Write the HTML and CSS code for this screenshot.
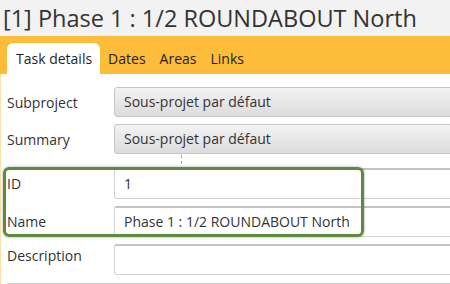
FILE: index.html
```html
<!DOCTYPE html>
<html lang="en">
<head>
    <meta charset="UTF-8">
    <title>Task details</title>
    <link rel="stylesheet" href="styles.css">
</head>
<body>

    <div class="window">
        <div class="title">[1] Phase 1 : 1/2 ROUNDABOUT North</div>

        <div class="tabs">
            <span class="tab active">Task details</span>
            <span class="tab">Dates</span>
            <span class="tab">Areas</span>
            <span class="tab">Links</span>
        </div>

        <div class="panel">
            <div class="row">
                <span class="label">Subproject</span>
                <div class="combo">Sous-projet par défaut</div>
            </div>
            <div class="row">
                <span class="label">Summary</span>
                <div class="combo">Sous-projet par défaut</div>
            </div>

            <div class="splitter"></div>

            <!-- champs mis en évidence -->
            <div class="group">
                <div class="row">
                    <span class="label">ID</span>
                    <div class="field">1</div>
                </div>
                <div class="row">
                    <span class="label">Name</span>
                    <div class="field">Phase 1 : 1/2 ROUNDABOUT North</div>
                </div>
            </div>

            <div class="row top">
                <span class="label">Description</span>
                <div class="field"></div>
            </div>

            <div class="rule"></div>
        </div>
    </div>

</body>
</html>
```

FILE: styles.css
```css
body {
    margin: 0;
    padding: 0;
    font-family: 'Open Sans', 'Noto Sans', sans-serif;
    color: #333;
    background: #fff;
}

.window {
    width: 450px;
    height: 284px;
    overflow: hidden;
}

.title {
    height: 36px;
    background-color: #f2f2f2;
    padding-left: 3px;
    font-size: 23.5px;
    line-height: 36px;
    color: #333;
    white-space: nowrap;
}

.tabs {
    height: 38px;
    background-color: #fdbc3a;
    display: flex;
    align-items: flex-end;
    padding-left: 7px;
    box-sizing: border-box;
}

.tab {
    font-size: 14px;
    color: #1f1f1f;
    height: 31px;
    line-height: 31px;
    padding: 0 7px;
}

.tab.active {
    background: #fff;
    border-radius: 6px 6px 0 0;
    padding: 0 8px 0 9px;
    margin-right: 1px;
}

.panel {
    border-left: 1px solid #fce2a6;
    padding: 13px 0 0 6px;
}

.row {
    display: flex;
    align-items: center;
    margin-bottom: 7px;
}

.row.top {
    align-items: flex-start;
}

.row.top .label {
    padding-top: 2px;
}

.label {
    width: 107px;
    flex: none;
    font-size: 14px;
    color: #333;
}

.combo {
    flex: 1;
    height: 30px;
    margin-right: -6px;
    box-sizing: border-box;
    border: 1px solid #c6c6c6;
    border-radius: 3px;
    background: linear-gradient(#f3f3f3, #dcdcdc);
    padding-left: 9px;
    font-size: 14px;
    line-height: 28px;
    color: #333;
}

.field {
    flex: 1;
    height: 31px;
    margin-right: -6px;
    box-sizing: border-box;
    border: 1px solid #d2d2d2;
    border-top: 2px solid #c4c4c4;
    border-radius: 3px;
    background: #fff;
    padding-left: 9px;
    font-size: 14px;
    line-height: 27px;
    color: #333;
}

.splitter {
    height: 9px;
    margin: -6px 0 4px 174px;
    border-left: 1px dashed #aaa;
}

.group {
    position: relative;
}

.group::after {
    content: "";
    position: absolute;
    left: -4px;
    top: -1px;
    width: 355px;
    height: 64px;
    border: 3px solid #5e8a3d;
    border-radius: 6px;
    box-shadow: 0 0 3px rgba(0, 0, 0, 0.35);
}

.rule {
    margin-top: 8px;
    border-top: 1px solid #d0d0d0;
}
```
